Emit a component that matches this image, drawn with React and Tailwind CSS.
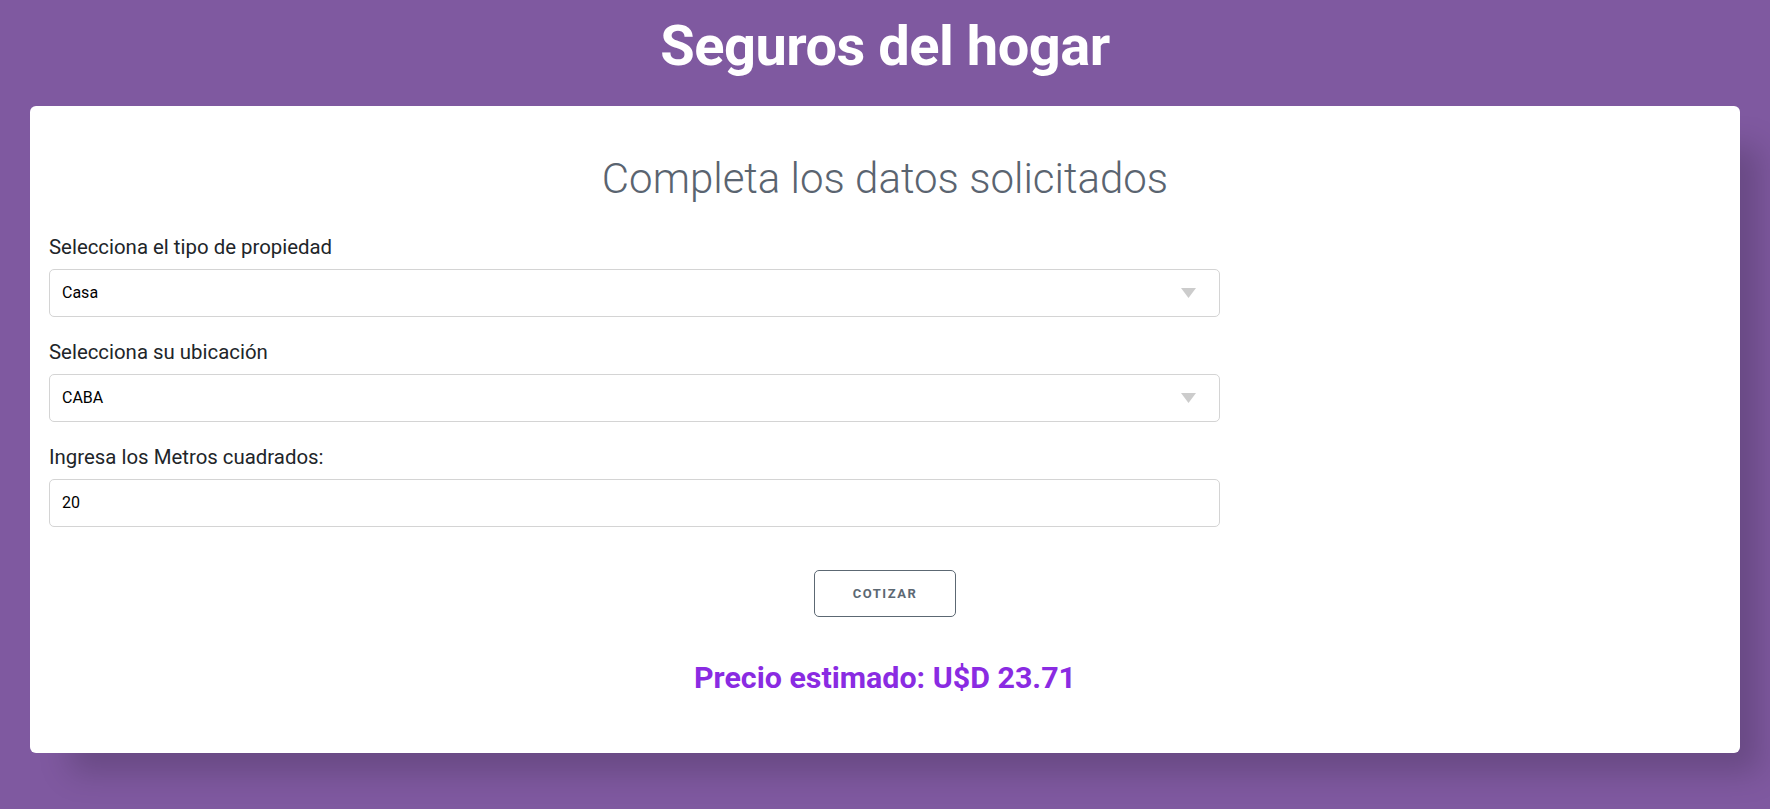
import React from "react";

function Arrow() {
  return (
    <svg width="15" height="10" viewBox="0 0 15 10" className="shrink-0">
      <polygon points="0,0 15,0 7.5,10" fill="#cccccc" />
    </svg>
  );
}

function SelectBox({ value }) {
  return (
    <div className="h-[48px] w-full border border-[#d4d4d4] rounded-[5px] flex items-center justify-between pl-3 pr-[23px] text-[16px] text-black">
      <span>{value}</span>
      <Arrow />
    </div>
  );
}

function Field({ label, children }) {
  return (
    <div className="flex flex-col">
      <label className="text-[20.4px] leading-[30px] text-[#212529] mb-[7px]">{label}</label>
      {children}
    </div>
  );
}

export default function App() {
  return (
    <div className="min-h-screen bg-[#7f59a0] pt-[11px]" style={{ fontFamily: "Roboto, 'Noto Sans', sans-serif" }}>
      <h1 className="text-center text-white font-bold text-[56px] leading-[70px] tracking-[-0.5px] mb-[25px]">
        Seguros del hogar
      </h1>
      <div className="mx-[30px] bg-white rounded-md shadow-[30px_30px_30px_-10px_rgba(0,0,0,0.18)] px-[19px] pt-[47px] pb-[56px]">
        <h2 className="text-center font-light text-[42px] leading-[52px] text-[#5a6470] mb-[27px]">
          Completa los datos solicitados
        </h2>
        <div className="w-[1171px] flex flex-col gap-[20px]">
          <Field label="Selecciona el tipo de propiedad">
            <SelectBox value="Casa" />
          </Field>
          <Field label="Selecciona su ubicación">
            <SelectBox value="CABA" />
          </Field>
          <Field label="Ingresa los Metros cuadrados:">
            <div className="h-[48px] w-full border border-[#d4d4d4] rounded-[5px] flex items-center pl-3 text-[16px] text-black">
              20
            </div>
          </Field>
        </div>
        <div className="flex justify-center mt-[43px]">
          <button className="h-[47px] w-[142px] border border-[#5c6873] rounded-[5px] text-[13px] font-bold tracking-[1.5px] text-[#5c6873] uppercase">
            Cotizar
          </button>
        </div>
        <p className="text-center font-bold text-[30.4px] leading-[38px] text-[#8a2be2] mt-[42px]">
          Precio estimado: U$D 23.71
        </p>
      </div>
    </div>
  );
}
